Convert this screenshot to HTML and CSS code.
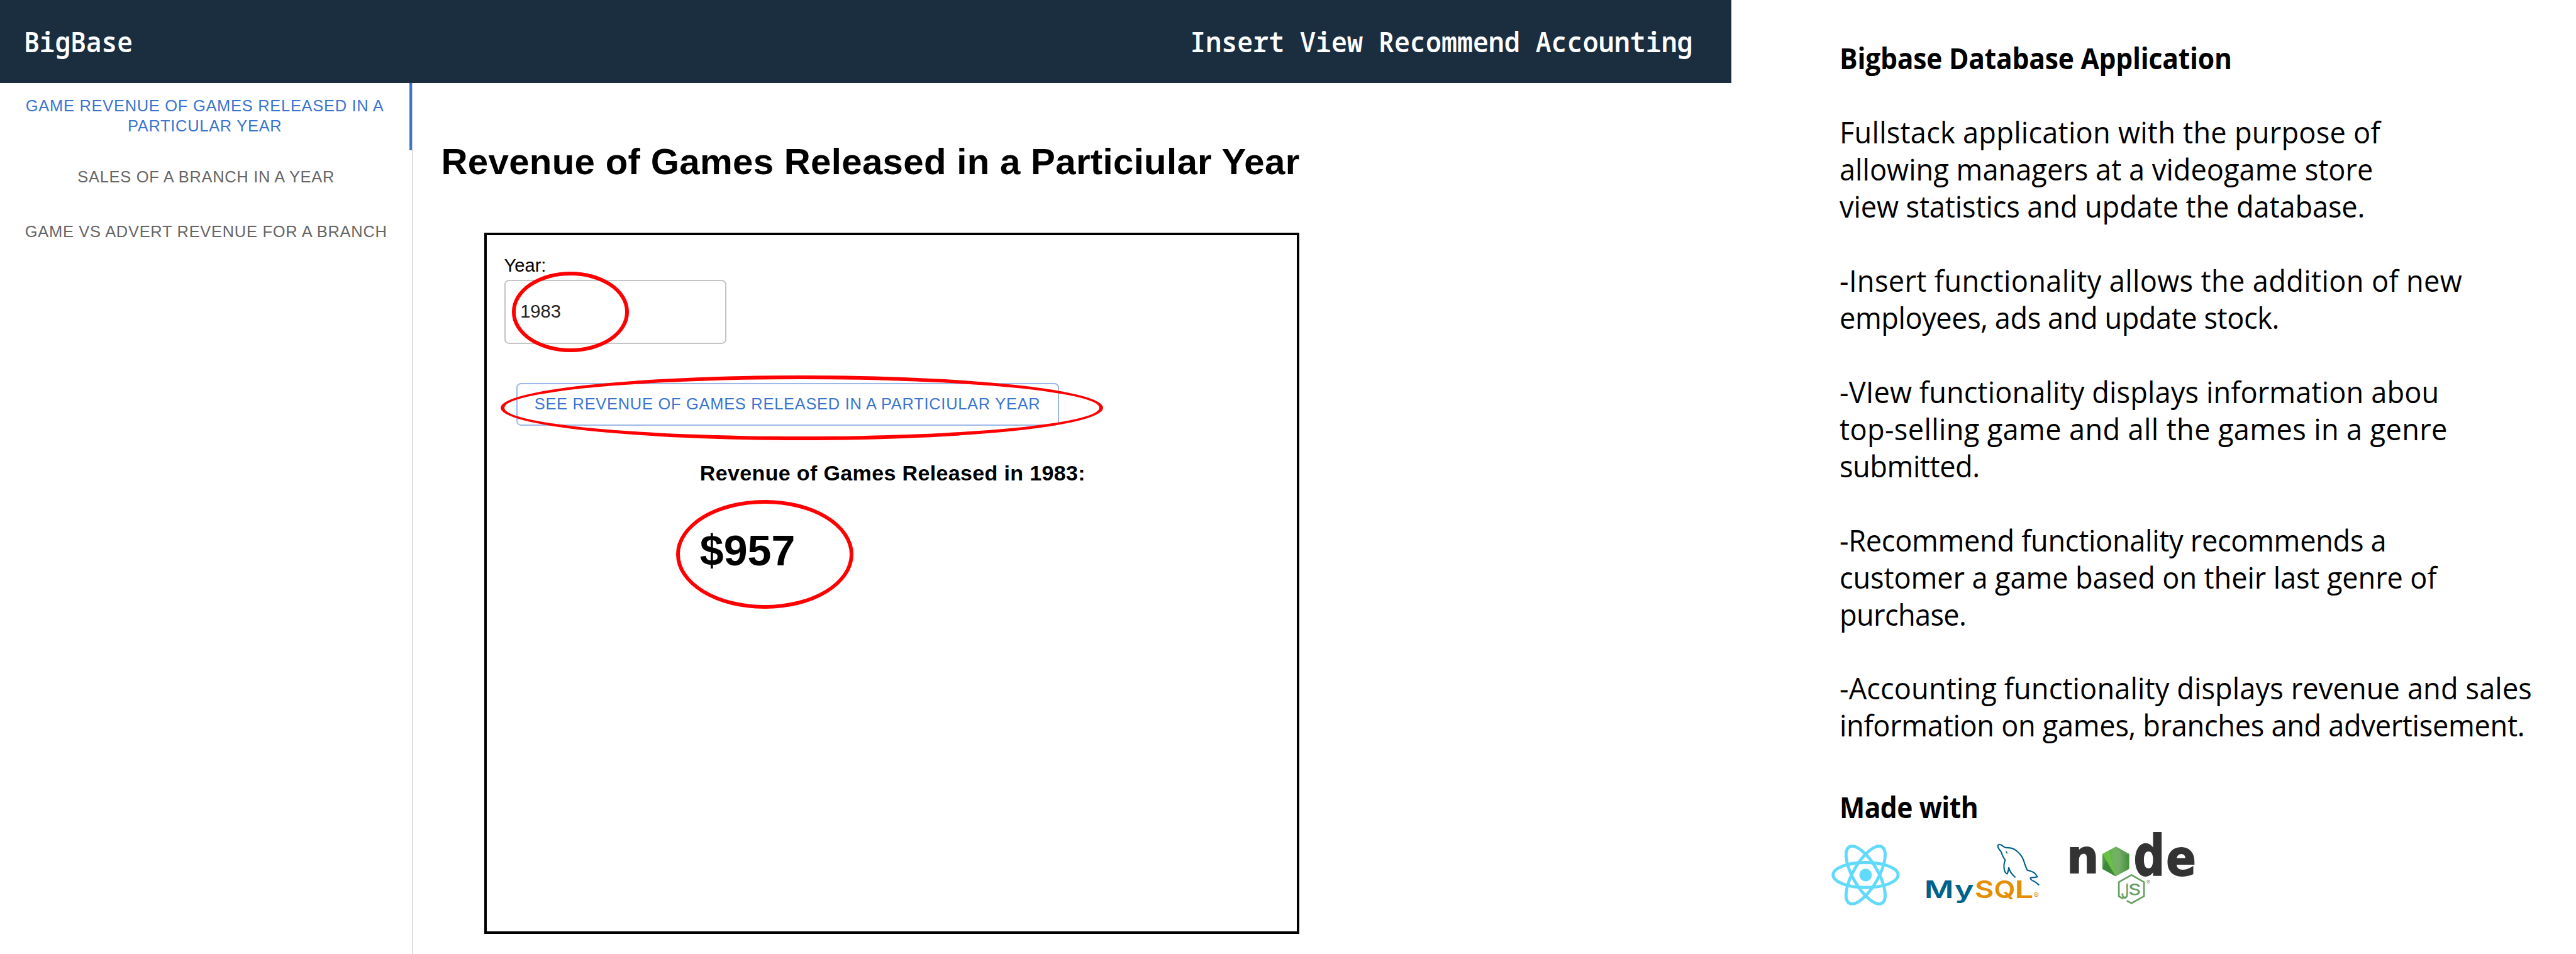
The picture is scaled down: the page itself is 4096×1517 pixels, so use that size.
FILE: index.html
```html
<!DOCTYPE html>
<html lang="en">
<head>
<meta charset="utf-8">
<title>BigBase</title>
<link rel="stylesheet" href="styles.css">
</head>
<body>
<div class="page">
  <section class="app">
    <header class="topbar">
      <span class="brand">BigBase</span>
      <nav class="nav">Insert View Recommend Accounting</nav>
    </header>
    <div class="body">
      <aside class="tabs">
        <div class="tab tab-active">GAME REVENUE OF GAMES RELEASED IN A<br>PARTICULAR YEAR</div>
        <div class="tab tab-sales">SALES OF A BRANCH IN A YEAR</div>
        <div class="tab">GAME VS ADVERT REVENUE FOR A BRANCH</div>
      </aside>
      <main class="main">
        <h1 class="title">Revenue of Games Released in a Particiular Year</h1>
        <div class="card">
          <div class="label">Year:</div>
          <div class="input">1983<span class="ring ring-input"></span></div>
          <div class="button">SEE REVENUE OF GAMES RELEASED IN A PARTICIULAR YEAR<span class="ring ring-button"></span></div>
          <div class="result">
            <h2 class="result-title">Revenue of Games Released in 1983:</h2>
            <div class="amount">$957<span class="ring ring-amount"></span></div>
          </div>
        </div>
      </main>
    </div>
  </section>

  <section class="about">
    <h2 class="about-title">Bigbase Database Application</h2>
    <div class="para">
      <div class="line ls-a">Fullstack application with the purpose of</div>
      <div class="line">allowing managers at a videogame store</div>
      <div class="line ls-h">view statistics and update the database.</div>
    </div>
    <div class="para">
      <div class="line ls-b">-Insert functionality allows the addition of new</div>
      <div class="line ls-f">employees, ads and update stock.</div>
    </div>
    <div class="para">
      <div class="line ls-c">-VIew functionality displays information abou</div>
      <div class="line ls-b">top-selling game and all the games in a genre</div>
      <div class="line ls-f">submitted.</div>
    </div>
    <div class="para">
      <div class="line ls-e">-Recommend functionality recommends a</div>
      <div class="line ls-d">customer a game based on their last genre of</div>
      <div class="line ls-g">purchase.</div>
    </div>
    <div class="para">
      <div class="line ls-c">-Accounting functionality displays revenue and sales</div>
      <div class="line ls-e">information on games, branches and advertisement.</div>
    </div>
    <h2 class="about-title made">Made with</h2>
    <div class="logos">
      <svg class="logo-react" viewBox="20 100 372 335" fill="none" stroke="#61dafb" stroke-width="16">
        <circle cx="206" cy="266" r="33" fill="#61dafb" stroke="none"/>
        <ellipse cx="206" cy="266" rx="170.500" ry="65.500"/>
        <ellipse cx="206" cy="266" rx="170.500" ry="65.500" transform="rotate(60 206 266)"/>
        <ellipse cx="206" cy="266" rx="170.500" ry="65.500" transform="rotate(120 206 266)"/>
      </svg>
      <svg class="logo-mysql" viewBox="515 98 615 324">
        <g fill="none" stroke="#00618a" stroke-width="7" stroke-linejoin="round">
          <path d="M939 190C929 176 922 164 918 148C912 136 902 132 900 120C898 108 907 105 915 109C926 114 932 123 942 124C960 124 972 124 988 134C1008 147 1022 162 1032 184C1041 206 1044 226 1054 242C1066 246 1080 248 1090 256C1098 262 1102 270 1107 277C1096 281 1082 278 1070 283C1072 292 1078 296 1088 300C1098 304 1106 312 1116 321"/>
          <path d="M939 188C930 205 930 222 934 242C937 252 942 260 949 261C954 250 955 240 957 229C962 252 975 266 992 280"/>
        </g>
        <path d="M940 143C947 142 951 148 950 156C945 156 944 150 940 143Z" fill="#00618a"/>
        <g class="wordmark">
          <text class="my" textLength="154" lengthAdjust="spacingAndGlyphs" transform="translate(514 387)">M</text>
          <text class="my" textLength="102" lengthAdjust="spacingAndGlyphs" transform="translate(672 387)">y</text>
          <text class="sql" textLength="100" lengthAdjust="spacingAndGlyphs" transform="translate(779 387)">S</text>
          <text class="sql" textLength="112" lengthAdjust="spacingAndGlyphs" transform="translate(879 387)">Q</text>
          <text class="sql" textLength="98" lengthAdjust="spacingAndGlyphs" transform="translate(988 387)">L</text>
          <text class="reg" x="1088" y="388">®</text>
        </g>
      </svg>
      <svg class="logo-node" viewBox="70 55 670 400">
        <defs>
          <linearGradient id="leaf"><stop offset="0" stop-color="#4a9a40"/><stop offset=".4" stop-color="#6cb65a"/><stop offset=".62" stop-color="#76ad6a"/><stop offset="1" stop-color="#429139"/></linearGradient>
        </defs>
        <text class="node node-n" textLength="168" lengthAdjust="spacingAndGlyphs" transform="translate(61 287)">n</text>
        <polygon points="318,148 388,187 388,265 318,304 248,265 248,187" fill="url(#leaf)"/>
        <polygon points="318,148 248,187 318,304 300,240 285,166" fill="#6cbf47"/>
        <polygon points="248,187 266,219 248,265" fill="#4f9b45"/>
        <polygon points="266,219 318,304 248,265" fill="#3d873a"/>
        <polygon points="318,148 388,187 363,195" fill="#5f9e58"/>
        <polygon points="388,187 388,237 363,195" fill="#4d9345"/>
        <text class="node node-d" textLength="164" lengthAdjust="spacingAndGlyphs" transform="translate(411 298)">d</text>
        <text class="node" textLength="157" lengthAdjust="spacingAndGlyphs" transform="translate(582 298)">e</text>
        <path d="M358 421Q352 420 334 408V334L400 297L466 334V408L400 445L376 432" fill="none" stroke="#68a063" stroke-width="9" stroke-linejoin="round"/>
        <text class="js js-j" textLength="42" lengthAdjust="spacingAndGlyphs" transform="translate(345 421)">J</text>
        <text class="js" textLength="66" lengthAdjust="spacingAndGlyphs" transform="translate(384 401)">S</text>
        <text class="reg-node" x="479" y="346">®</text>
      </svg>
    </div>
  </section>
</div>
</body>
</html>
```

FILE: styles.css
```css
/* 1rem = 100 design units; the design is 4500 units wide */
html { font-size: calc(100vw / 45); }
body { margin: 0; background: #fff; color: #000; font-family: "Liberation Sans", Arial, sans-serif; }
h1, h2 { margin: 0; }
.page { display: flex; height: 100vh; overflow: hidden; }

.app { width: 30.24rem; display: flex; flex-direction: column; flex: none; }
.topbar {
  height: 1.45rem; box-sizing: border-box; padding: 0 .67rem .03rem .42rem;
  display: flex; align-items: center; justify-content: space-between;
  background: #1a2e40; color: #fff; white-space: nowrap;
  font: 600 .5rem "Noto Sans Mono", "DejaVu Sans Mono", monospace;
}
.brand { transform: scaleX(.905); transform-origin: left; }
.nav { transform: scaleX(.915); transform-origin: right; }
.body { display: flex; flex: 1; }

.tabs { width: 7.2rem; border-right: .022rem solid #ddd; flex: none; }
.tab {
  height: .96rem; box-sizing: border-box; padding-top: .29rem;
  font-size: .28rem; line-height: .345rem; letter-spacing: .0078rem;
  text-align: center; color: #666; white-space: nowrap;
}
.tab-sales { letter-spacing: .0075rem; }
.tab-active { height: 1.18rem; padding-top: .235rem; border-right: .044rem solid #3a75cf; color: #3a75cf; }

.main { flex: 1; padding: 1.003rem 0 0 .485rem; }
.title { font-size: .64rem; line-height: .74rem; letter-spacing: .003rem; white-space: nowrap; }
.card {
  width: 14.24rem; height: 12.24rem; box-sizing: border-box;
  margin: .877rem 0 0 .755rem; padding: .344rem 0 0 .3rem; border: .044rem solid #000;
}
.label { font-size: .32rem; line-height: .37rem; }
.input {
  position: relative; width: 3.88rem; height: 1.12rem; box-sizing: border-box;
  margin-top: .066rem; padding: 0 .26rem .02rem; border: .022rem solid #c4c4c4; border-radius: .08rem;
  display: flex; align-items: center; font-size: .32rem; color: #222;
}
.button {
  position: relative; width: 9.48rem; height: .74rem; box-sizing: border-box;
  margin: .68rem 0 0 .21rem; border: .022rem solid #9cbae7; border-radius: .08rem;
  display: flex; align-items: center; justify-content: center;
  font-size: .28rem; letter-spacing: .0078rem; color: #3a75cf; white-space: nowrap;
}
.result { margin: .618rem 0 0 3.42rem; }
.result-title { font-size: .3744rem; line-height: .43rem; letter-spacing: .0036rem; }
.amount { position: relative; margin-top: .703rem; font-size: .7488rem; line-height: .86rem; font-weight: 700; }

/* hand-marked highlights over the form */
.ring { position: absolute; box-sizing: border-box; border: .066rem solid #f00; border-radius: 50%; }
.ring-input { left: .11rem; top: -.165rem; width: 2.05rem; height: 1.4rem; }
.ring-button { left: -.29rem; top: -.155rem; width: 10.52rem; height: 1.13rem; }
.ring-amount { left: -.42rem; top: -.455rem; width: 3.1rem; height: 1.91rem; }

.about { margin-left: 1.9rem; padding-top: .695rem; font-family: "Open Sans", "Noto Sans", sans-serif; }
.about-title { font-size: .52rem; line-height: .6477rem; letter-spacing: -.0028rem; white-space: nowrap; transform: scaleX(.9); transform-origin: left; }
.made { margin-top: .772rem; letter-spacing: -.0065rem; }
.para { margin-top: .6477rem; }
.line { font-size: .52rem; line-height: .6477rem; white-space: nowrap; transform: scaleX(.955); transform-origin: left; }
.ls-a { letter-spacing: .0026rem; }
.ls-b { letter-spacing: .0039rem; }
.ls-c { letter-spacing: .0011rem; }
.ls-d { letter-spacing: -.0015rem; }
.ls-e { letter-spacing: -.0038rem; }
.ls-f { letter-spacing: -.0053rem; }
.ls-g { letter-spacing: -.0075rem; }
.ls-h { letter-spacing: -.0015rem; }

.logos { display: flex; align-items: flex-start; margin: -.01rem 0 0 -.173rem; }
.logos svg { overflow: visible; }
.logo-react { width: 1.24rem; height: 1.117rem; margin-top: .321rem; }
.logo-mysql { width: 2.05rem; height: 1.08rem; margin: .315rem 0 0 .41rem; }
.logo-node { width: 2.233rem; height: 1.333rem; margin: .071rem 0 0 .466rem; }
.wordmark { font-family: Inter, "Liberation Sans", sans-serif; font-size: 127px; font-weight: 600; }
.my { fill: #00618a; }
.sql { fill: #e48e00; }
.reg { fill: #e48e00; font-size: 40px; font-weight: 400; }
.node { fill: #333; stroke: #333; stroke-width: 6px; font: 700 258px "DejaVu Sans", sans-serif; }
.node-n { font-size: 240px; }
.node-d { font-size: 295px; }
.js { fill: #68a063; font: 500 82px Inter, "Liberation Sans", sans-serif; }
.js-j { font-size: 106px; }
.reg-node { fill: #68a063; font: 400 30px Inter, "Liberation Sans", sans-serif; }
```
